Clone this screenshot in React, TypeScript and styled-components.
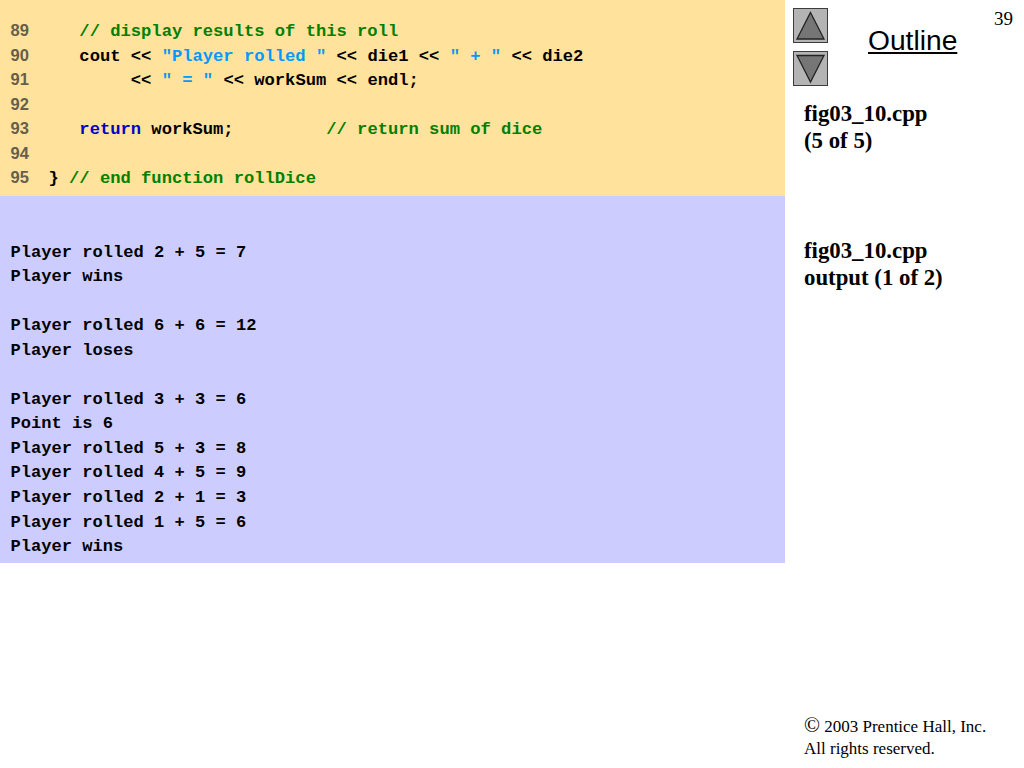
import React from "react";
import styled, { createGlobalStyle } from "styled-components";

const Global = createGlobalStyle`
  html, body { margin: 0; padding: 0; background: #fff; }
`;
const Page = styled.div`
  width: 1024px; height: 768px; display: flex; position: relative; overflow: hidden; background: #fff;
`;
const Main = styled.div`
  width: 785px; flex: none; display: flex; flex-direction: column;
`;
const SourcePanel = styled.div`
  background: #ffe29b;
  height: 196px;
  padding: 18px 0 0 10.5px;
  box-sizing: border-box;
  flex: none;
`;
const OutputPanel = styled.div`
  background: #ccccff;
  height: 367px;
  padding: 20px 0 0 10.5px;
  box-sizing: border-box;
  flex: none;
`;
const SourceLine = styled.div`
  height: 24.5px; display: flex;
  font: bold 17.15px/24.5px "Liberation Mono", monospace;
  white-space: pre; color: #000;
`;
const OutputLine = styled.div`
  height: 24.56px;
  font: bold 17.08px/24.56px "Liberation Mono", monospace;
  white-space: pre; color: #000;
`;
const LineNo = styled.span`
  width: 38px; flex: none; color: #665e4c; padding-top: 0.4px;
  font: bold 16.5px/24.5px "Liberation Sans", sans-serif;
`;
const Code = styled.span`
  position: relative; top: 2px; display: block;
`;
const Tok = styled.span<{ $c?: string }>`
  color: ${(p) => p.$c || "#000"};
`;
const Side = styled.div`
  flex: 1; display: flex; flex-direction: column; padding-left: 19px; position: relative;
`;
const PageNum = styled.div`
  position: absolute; top: 8px; right: 11px;
  font: 19px "Liberation Serif", serif; color: #000;
`;
const Nav = styled.div`
  display: flex; height: 100px; box-sizing: border-box; padding: 8px 0 0 8px; margin-left: -19px;
`;
const NavButtons = styled.div`
  display: flex; flex-direction: column; gap: 8px;
`;
const NavBtn = styled.svg`
  width: 35px; height: 35px; display: block;
`;
const Outline = styled.div`
  font: 28.2px "Liberation Sans", sans-serif; text-decoration: underline;
  margin: 16px 0 0 40px; color: #000;
`;
const Caption = styled.div<{ $top: number }>`
  font: bold 22.8px/27px "Liberation Serif", serif; color: #000; margin-top: ${(p) => p.$top}px;
`;
const Copyright = styled.div`
  margin-top: auto; margin-bottom: 8px;
  font: 17px/22px "Liberation Serif", serif; color: #000;
`;
const Mark = styled.span`
  font-size: 21px; line-height: 22px;
`;

type T = [string, string?];
const G = "#008000", B = "#0099ff", N = "#0000cc";
const code: [number, T[]][] = [
  [89, [["   "], ["// display results of this roll", G]]],
  [90, [["   cout << "], ['"Player rolled "', B], [" << die1 << "], ['" + "', B], [" << die2"]]],
  [91, [["        << "], ['" = "', B], [" << workSum << endl;"]]],
  [92, []],
  [93, [["   "], ["return", N], [" workSum;         "], ["// return sum of dice", G]]],
  [94, []],
  [95, [["} "], ["// end function rollDice", G]]],
];
const output = [
  "", "Player rolled 2 + 5 = 7", "Player wins", "", "Player rolled 6 + 6 = 12", "Player loses", "",
  "Player rolled 3 + 3 = 6", "Point is 6", "Player rolled 5 + 3 = 8", "Player rolled 4 + 5 = 9",
  "Player rolled 2 + 1 = 3", "Player rolled 1 + 5 = 6", "Player wins",
];

const Btn = ({ up }: { up?: boolean }) => (
  <NavBtn viewBox="0 0 35 35">
    <rect x="0.5" y="0.5" width="34" height="34" fill="#b4b4b4" stroke="#3c3c3c" />
    <path d={up ? "M17.5 4.5L31 31H4Z" : "M4 4.5H31L17.5 31Z"} fill="#767676" stroke="#222" strokeWidth="1.3" />
  </NavBtn>
);

export default function App() {
  return (
    <Page>
      <Global />
      <Main>
        <SourcePanel>
          {code.map(([n, toks]) => (
            <SourceLine key={n}>
              <LineNo>{n}</LineNo>
              <Code>
                {toks.map((t, i) => (
                  <Tok key={i} $c={t[1]}>{t[0]}</Tok>
                ))}
              </Code>
            </SourceLine>
          ))}
        </SourcePanel>
        <OutputPanel>
          {output.map((l, i) => (
            <OutputLine key={i}>{l}</OutputLine>
          ))}
        </OutputPanel>
      </Main>
      <Side>
        <PageNum>39</PageNum>
        <Nav>
          <NavButtons>
            <Btn up />
            <Btn />
          </NavButtons>
          <Outline>Outline</Outline>
        </Nav>
        <Caption $top={0}>fig03_10.cpp<br />(5 of 5)</Caption>
        <Caption $top={83}>fig03_10.cpp<br />output (1 of 2)</Caption>
        <Copyright><Mark>©</Mark> 2003 Prentice Hall, Inc.<br />All rights reserved.</Copyright>
      </Side>
    </Page>
  );
}
